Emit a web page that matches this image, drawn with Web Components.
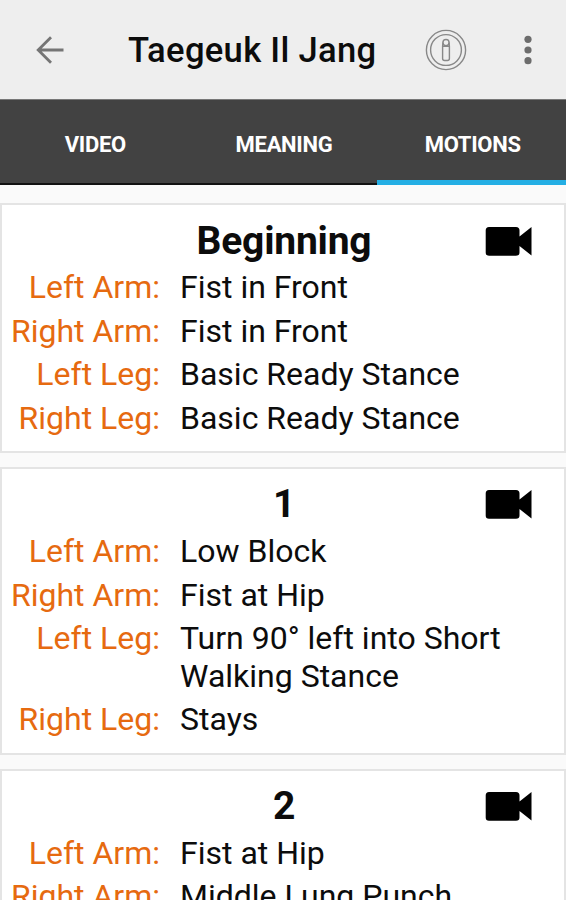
<!DOCTYPE html>
<html lang="en">
<head>
<meta charset="utf-8">
<title>Taegeuk Il Jang</title>
<style>
  body {
    margin: 0;
    height: 900px;
    overflow: hidden;
    background: #fafafa;
    color: #0c0c0c;
    font-family: Roboto, sans-serif;
  }
</style>
</head>
<body>
<tkd-app-bar>Taegeuk Il Jang</tkd-app-bar>
<tkd-tabs>
  <tkd-tab>VIDEO</tkd-tab>
  <tkd-tab>MEANING</tkd-tab>
  <tkd-tab active>MOTIONS</tkd-tab>
</tkd-tabs>
<tkd-motion-list>
  <tkd-motion heading="Beginning">
    <tkd-limb label="Left Arm:">Fist in Front</tkd-limb>
    <tkd-limb label="Right Arm:">Fist in Front</tkd-limb>
    <tkd-limb label="Left Leg:">Basic Ready Stance</tkd-limb>
    <tkd-limb label="Right Leg:">Basic Ready Stance</tkd-limb>
  </tkd-motion>
  <tkd-motion heading="1">
    <tkd-limb label="Left Arm:">Low Block</tkd-limb>
    <tkd-limb label="Right Arm:">Fist at Hip</tkd-limb>
    <tkd-limb label="Left Leg:">Turn 90° left into Short Walking Stance</tkd-limb>
    <tkd-limb label="Right Leg:">Stays</tkd-limb>
  </tkd-motion>
  <tkd-motion heading="2">
    <tkd-limb label="Left Arm:">Fist at Hip</tkd-limb>
    <tkd-limb label="Right Arm:">Middle Lung Punch</tkd-limb>
  </tkd-motion>
</tkd-motion-list>

<script>
function define(name, html, setup) {
  const template = document.createElement("template");
  template.innerHTML = html;

  customElements.define(name, class extends HTMLElement {
    constructor() {
      super();
      this.shadow = this.attachShadow({ mode: "open" });
      this.shadow.append(template.content.cloneNode(true));
      if (setup) setup(this, this.shadow);
    }
  });
}

define("tkd-app-bar", `
<svg class="back" width="28" height="28" viewBox="0 0 28 28" fill="none" stroke="#757575" stroke-width="2.8">
  <path d="M27.5 14H2M15 1.2L2.2 14L15 26.8" />
</svg>
<h1><slot></slot></h1>
<svg class="info" width="42" height="42" viewBox="0 0 42 42" fill="none" stroke="#888" stroke-width="1.4">
  <circle cx="21" cy="21" r="19.6" />
  <circle cx="21" cy="21" r="15.4" />
  <circle cx="21" cy="13.6" r="3.1" />
  <path d="M18 13.5L17.6 17V29.5Q17.6 31.5 19.6 31.5H22.4Q24.4 31.5 24.4 29.5V17L24 13.5M17.6 17.2H24.4" />
</svg>
<svg class="more" width="8" height="30" viewBox="0 0 8 30" fill="#6c6c6c">
  <circle cx="4" cy="4.3" r="3.6" />
  <circle cx="4" cy="15" r="3.6" />
  <circle cx="4" cy="25.7" r="3.6" />
</svg>
<style>
  :host {
    display: flex;
    align-items: center;
    box-sizing: border-box;
    height: 99px;
    padding: 1px 34.5px 0 36px;
    background: #eee;
  }

  svg {
    flex: none;
  }

  h1 {
    flex: 1;
    margin: 0 0 0 64px;
    font-size: 34.6px;
    line-height: 40px;
    font-weight: 500;
    letter-spacing: 0.3px;
    white-space: nowrap;
  }

  .more {
    margin-left: 56.5px;
  }
</style>
`);

define("tkd-tabs", `
<slot></slot>
<style>
  :host {
    display: grid;
    grid-template-columns: repeat(3, 1fr);
    box-sizing: border-box;
    height: 86px;
    border-top: 1px solid #777;
    background: #424242;
  }
</style>
`);

define("tkd-tab", `
<slot></slot>
<style>
  :host {
    display: grid;
    place-items: center;
    padding: 3px 0 0 2px;
    color: #fff;
    font-size: 22px;
    font-weight: 700;
    letter-spacing: -0.3px;
    box-shadow: inset 0 -2px #111;
  }

  :host([active]) {
    box-shadow: inset 0 -5px #24aee4;
  }
</style>
`);

define("tkd-motion-list", `
<slot></slot>
<style>
  :host {
    display: flex;
    flex-direction: column;
    gap: 14px;
    padding-top: 18px;
  }
</style>
`);

define("tkd-motion", `
<header>
  <h2></h2>
  <svg width="48" height="30" viewBox="0 0 48 30">
    <path d="M4 1H31Q34.5 1 34.5 4.5V10.5L46.5 1V29.5L34.5 20V26.5Q34.5 29.7 31 29.7H4Q.7 29.7 .7 26.5V4.5Q.7 1 4 1Z" />
  </svg>
</header>
<slot></slot>
<style>
  :host {
    display: block;
    padding: 0 8px 7.6px;
    border: 2px solid #e4e4e4;
    background: #fff;
  }

  header {
    display: grid;
    grid-template-columns: 1fr auto 1fr;
    align-items: center;
    height: 60px;
    padding-top: 3px;
    box-sizing: border-box;
    margin-top: 4px;
  }

  h2 {
    grid-column: 2;
    margin: 0;
    padding-left: 2px;
    font-size: 39px;
    line-height: 46px;
    font-weight: 700;
    letter-spacing: -0.2px;
  }

  svg {
    justify-self: end;
    margin-right: 23px;
  }
</style>
`, (host, shadow) => {
  shadow.querySelector("h2").textContent = host.getAttribute("heading");
});

define("tkd-limb", `
<span class="label"></span>
<span><slot></slot></span>
<style>
  :host {
    display: grid;
    grid-template-columns: 150px 1fr;
    column-gap: 20px;
    padding-bottom: 6px;
    font-size: 32px;
    line-height: 37.6px;
  }

  .label {
    color: #e66a10;
    text-align: right;
    white-space: nowrap;
  }
</style>
`, (host, shadow) => {
  shadow.querySelector(".label").textContent = host.getAttribute("label");
});
</script>
</body>
</html>
